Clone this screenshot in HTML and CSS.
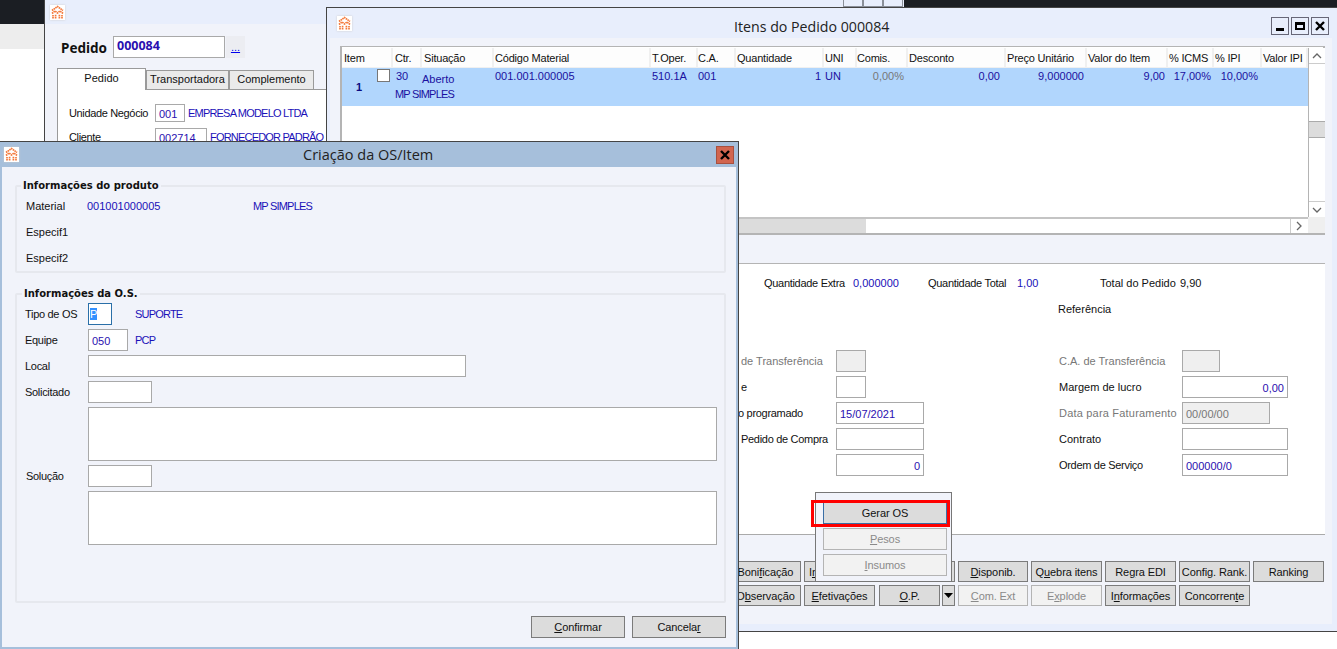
FILE: index.html
```html
<!DOCTYPE html>
<html lang="pt">
<head>
<meta charset="utf-8">
<title>Criação da OS/Item</title>
<link rel="stylesheet" href="styles.css">
</head>
<body>
<svg class="defs" width="0" height="0">
  <symbol id="logo" viewBox="0 0 15 15">
    <rect width="15" height="15" fill="#fff"/>
    <g fill="none" stroke="#f4793b" stroke-width="1.7" stroke-dasharray="1.6 .5">
      <path d="M2 5.5 L7.5 1.5 L13 5.5"/>
      <path d="M2 8.5 L5 6 L7.5 8 L10 6 L13 8.5"/>
      <path d="M3 13.5 V10 M5.6 13.5 V9.5 M9.4 13.5 V9.5 M12 13.5 V10"/>
    </g>
  </symbol>
</svg>

<div class="desk-top-left"><div class="dark-strip"></div><div class="gray-strip"></div></div>
<div class="desk-top-right"></div>

<section class="window win-back">
  <header class="back-title"><svg class="logo"><use href="#logo"/></svg></header>
  <div class="back-chrome"><i></i><i></i><i></i></div>
  <div class="pedido-row">
    <strong class="pedido-label">Pedido</strong>
    <span class="field pedido-input">000084</span>
    <span class="ellipsis">...</span>
  </div>
  <div class="tabs">
    <span class="tab tab-on">Pedido</span>
    <span class="tab tab-t">Transportadora</span>
    <span class="tab tab-c">Complemento</span>
  </div>
  <div class="tab-body">
    <div class="back-row"><span class="back-label">Unidade Negócio</span><span class="field w30">001</span><span class="val caps">EMPRESA MODELO LTDA</span></div>
    <div class="back-row"><span class="back-label">Cliente</span><span class="field w52">002714</span><span class="val caps">FORNECEDOR PADRÃO</span></div>
  </div>
</section>

<section class="window win-items">
  <header class="items-title">
    <svg class="logo"><use href="#logo"/></svg>
    <h1 class="title-text">Itens do Pedido 000084</h1>
    <div class="win-btns">
      <span class="wbtn"><svg width="16" height="16" viewBox="0 0 16 16"><rect x="4" y="10" width="8" height="3"/></svg></span>
      <span class="wbtn"><svg width="16" height="16" viewBox="0 0 16 16"><path fill-rule="evenodd" d="M3 4h10v8H3z M5 7h6v3H5z"/></svg></span>
      <span class="wbtn"><svg width="16" height="16" viewBox="0 0 16 16"><path d="M4 4 L12 12 M12 4 L4 12" stroke="#000" stroke-width="2.4"/></svg></span>
    </div>
  </header>
  <div class="items-body">
    <div class="grid-box">
      <div class="grid-main">
        <div class="grid-cols grid-head">
          <span>Item</span><span>Ctr.</span><span>Situação</span><span class="h1">Código Material</span><span class="h1">T.Oper.</span><span class="h0">C.A.</span><span class="h1">Quantidade</span><span class="h1">UNI</span><span class="h0">Comis.</span><span class="h1">Desconto</span><span class="h1">Preço Unitário</span><span class="h1">Valor do Item</span><span class="h1">% ICMS</span><span class="h1">% IPI</span><span class="h1">Valor IPI</span>
        </div>
        <div class="grid-cols grid-row">
          <span class="c-item"><b>1</b><i class="check"></i></span>
          <span class="c-ctr">30</span>
          <span class="c-sit">Aberto</span>
          <span class="r1">001.001.000005</span><span class="r1">510.1A</span><span class="r0">001</span>
          <span class="num p3">1</span><span class="r1">UN</span><span class="num muted">0,00%</span><span class="num p6">0,00</span><span class="num p3">9,000000</span><span class="num p3">9,00</span><span class="num p3">17,00%</span><span class="num">10,00%</span><span></span>
          <span class="c-desc caps">MP SIMPLES</span>
        </div>
      </div>
      <div class="vscroll">
        <span class="sb-btn"><svg width="16" height="16" viewBox="0 0 16 16"><path d="M4 10 L8 6 L12 10" fill="none" stroke="#666" stroke-width="1.3"/></svg></span>
        <span class="sb-track"><i class="sb-thumb"></i></span>
        <span class="sb-btn"><svg width="16" height="16" viewBox="0 0 16 16"><path d="M4 6 L8 10 L12 6" fill="none" stroke="#666" stroke-width="1.3"/></svg></span>
      </div>
      <div class="hscroll">
        <span class="hs-spacer"></span>
        <span class="hs-thumb"></span>
        <span class="hs-track"></span>
        <span class="hs-btn"><svg width="16" height="14" viewBox="0 1 16 14"><path d="M6 4 L10 8 L6 12" fill="none" stroke="#666" stroke-width="1.3"/></svg></span>
      </div>
      <div class="corner"></div>
    </div>

    <div class="order-panel">
      <div class="totals">
        <span class="t1 tight">Quantidade Extra</span><span class="val t2">0,000000</span>
        <span class="t3 tight">Quantidade Total</span><span class="val t4">1,00</span>
        <span class="t5">Total do Pedido</span><span class="t6">9,90</span>
      </div>
      <div class="ref">Referência</div>
      <div class="order-form">
        <span class="lab off">de Transferência</span><span class="field w30 dis"></span>
        <span class="lab off r">C.A. de Transferência</span><span class="field w38 dis"></span>

        <span class="lab">e</span><span class="field w30"></span>
        <span class="lab r">Margem de lucro</span><span class="field w106 right">0,00</span>

        <span class="lab lab-o tight">o programado</span><span class="field w88">15/07/2021</span>
        <span class="lab off r wide">Data para Faturamento</span><span class="field w88 dis grayv">00/00/00</span>

        <span class="lab tight">Pedido de Compra</span><span class="field w88"></span>
        <span class="lab r">Contrato</span><span class="field w106"></span>

        <span class="lab"></span><span class="field w88 right">0</span>
        <span class="lab r tight">Ordem de Serviço</span><span class="field w106">000000/0</span>
      </div>
    </div>

    <div class="btn-area">
      <div class="btn-row">
        <span class="btn b71">Boni<u>f</u>icação</span>
        <span class="btn b71 left">I<u>n</u></span>
        <span class="btn b76"></span>
        <span class="btn b69"><u>D</u>isponib.</span>
        <span class="btn b71"><span>Q<u>u</u>ebra itens</span></span>
        <span class="btn b71">Re<u>g</u>ra EDI</span>
        <span class="btn b71">Config. Rank.</span>
        <span class="btn b71">Ranking</span>
      </div>
      <div class="btn-row">
        <span class="btn b71">O<u>b</u>servação</span>
        <span class="btn b71"><u>E</u>fetivações</span>
        <span class="btn b61"><u>O</u>.P.</span>
        <span class="btn b13"><svg width="9" height="5" viewBox="0 0 9 5"><path d="M0 0H9L4.5 5Z"/></svg></span>
        <span class="btn b69 off"><u>C</u>om. Ext</span>
        <span class="btn b71 off">E<u>x</u>plode</span>
        <span class="btn b71">I<u>n</u>formações</span>
        <span class="btn b71">Concorren<u>t</u>e</span>
      </div>
    </div>
  </div>
</section>

<div class="popup">
  <span class="btn pop focus">Gerar OS</span>
  <span class="btn pop off"><u>P</u>esos</span>
  <span class="btn pop off"><u>I</u>nsumos</span>
</div>
<div class="red-mark"></div>

<section class="window dialog">
  <header class="dlg-title">
    <svg class="logo"><use href="#logo"/></svg>
    <h2 class="dlg-text">Criação da OS/Item</h2>
    <span class="dlg-close"><svg width="12" height="12" viewBox="0 0 12 12"><path d="M2 2 L10 10 M10 2 L2 10" stroke="#000" stroke-width="2.4"/></svg></span>
  </header>
  <div class="dlg-body">
    <fieldset class="group g1">
      <legend>Informações do produto</legend>
      <div class="info-row"><span class="il">Material</span><span class="val iv">001001000005</span><span class="val caps">MP SIMPLES</span></div>
      <div class="info-row"><span class="il">Especif1</span></div>
      <div class="info-row"><span class="il">Especif2</span></div>
    </fieldset>
    <fieldset class="group g2">
      <legend>Informações da O.S.</legend>
      <div class="os-form">
        <div class="os-row"><span class="ol">Tipo de OS</span><span class="field w24 focus-f"><mark>P</mark></span><span class="val caps ov">SUPORTE</span></div>
        <div class="os-row"><span class="ol">Equipe</span><span class="field w40">050</span><span class="val caps ov2">PCP</span></div>
        <div class="os-row"><span class="ol">Local</span><span class="field w378"></span></div>
        <div class="os-row"><span class="ol">Solicitado</span><span class="field w64"></span></div>
        <div class="os-row tall"><span class="ol"></span><span class="field w629 area"></span></div>
        <div class="os-row"><span class="ol sol">Solução</span><span class="field w64"></span></div>
        <div class="os-row tall"><span class="ol"></span><span class="field w629 area"></span></div>
      </div>
    </fieldset>
    <div class="dlg-actions">
      <span class="btn b94"><u>C</u>onfirmar</span>
      <span class="btn b94">Cancela<u>r</u></span>
    </div>
  </div>
</section>
</body>
</html>
```
FILE: styles.css
```css
* { box-sizing: border-box; }
html, body { margin: 0; height: 100%; }
body {
  position: relative;
  width: 1337px;
  height: 649px;
  overflow: hidden;
  background: #fff;
  font: 11px/14px "Liberation Sans", Arial, sans-serif;
  color: #111;
}
u { text-decoration: underline; }
.defs { position: absolute; }
.logo { display: block; width: 15px; height: 15px; box-shadow: 0 0 2px #ccc; flex: none; }
.caps { letter-spacing: -.8px; }
.tight { letter-spacing: -.3px; }
.wide { letter-spacing: .2px; }

.desk-top-left { position: absolute; left: 0; top: 0; width: 44px; }
.dark-strip { height: 24px; background: #1b1e23; }
.gray-strip { height: 25px; background: #ededed; }
.desk-top-right { position: absolute; left: 904px; top: 0; right: 0; height: 8px; background: #1b1e23; }

.window { position: absolute; }

/* back window */
.win-back { left: 44px; top: 0; width: 860px; height: 200px; background: #f1f3fa; border-left: 1px solid #444; }
.back-title { height: 24px; background: #e8eefc; padding: 5px 0 0 5px; }
.back-chrome { position: absolute; left: 798px; top: 0; display: flex; gap: 0; }
.back-chrome i { display: block; width: 20px; height: 7px; border: 1px solid #8a8f99; border-top: 0; background: #e8eefc; }
.pedido-row { display: flex; align-items: center; height: 22px; margin: 12px 0 0 16px; }
.pedido-label { font: bold 13.5px/18px "Noto Sans", sans-serif; width: 52px; padding-top: 1px; height: 19px; }
.pedido-input { width: 112px; height: 22px; font: bold 12.5px/21px "Noto Sans", sans-serif; }
.ellipsis { width: 19px; height: 22px; margin-left: 1px; background: #ecedf2; color: #00e; text-align: center; text-decoration: underline; line-height: 22px; }
.tabs { display: flex; align-items: flex-end; height: 21px; margin: 10px 0 0 12px; }
.tab { display: block; height: 19px; border: 1px solid #9a9a9a; border-bottom: 0; background: #eaeaea; text-align: center; line-height: 16px; white-space: nowrap; }
.tab-on { width: 89px; height: 22px; background: #fff; line-height: 19px; position: relative; top: 1px; }
.tab-t { width: 83px; }
.tab-c { width: 85px; }
.tab-body { margin-left: 12px; height: 120px; background: #fff; border-top: 1px solid #9a9a9a; border-left: 1px solid #9a9a9a; padding-top: 14px; }
.back-row { display: flex; align-items: center; height: 18px; margin-bottom: 6px; }
.back-label { flex: none; width: 97px; padding-left: 11px; white-space: nowrap; letter-spacing: -.35px; }
.val { color: #1a10b8; white-space: nowrap; }
.back-row .val { margin-left: 3px; }

/* fields */
.field { display: block; flex: none; height: 22px; padding: 3px 3px 0; border: 1px solid #a9a9a9; background: #fff; color: #2a0fb0; line-height: 16px; }
.w24 { width: 24px; } .w30 { width: 30px; } .w38 { width: 38px; } .w40 { width: 40px; } .w52 { width: 52px; }
.w64 { width: 64px; } .w88 { width: 88px; } .w106 { width: 106px; } .w378 { width: 378px; } .w629 { width: 629px; }
.back-row .field { height: 18px; padding-top: 1px; }
.pedido-row .field { padding-top: 1px; }
.right { text-align: right; }
.dis { background: #efefef; }
.grayv { color: #777; }

/* items window */
.win-items { left: 326px; top: 7px; width: 1011px; height: 625px; background: #e8eefc; border-top: 1px solid #444; border-left: 1px solid #444; border-bottom: 1px solid #444; }
.items-title { position: relative; display: flex; align-items: center; height: 30px; padding-left: 10px; }
.title-text { position: absolute; left: 407px; top: 9px; margin: 0; font: 400 14.2px/20px "Open Sans", sans-serif; color: #222; white-space: nowrap; }
.win-btns { display: flex; gap: 2px; margin-left: auto; margin-right: 8px; margin-top: 6px; }
.wbtn { display: block; width: 18px; height: 18px; border: 1px solid #667; background: #e8eefc; }
.wbtn svg { display: block; }
.items-body { margin-left: 3px; height: 586px; width: 1002px; background: #f1f3fa; padding: 8px 0 0 10px; }
.grid-box { display: grid; grid-template-columns: 966px 17px; grid-template-rows: 169px 16px; width: 985px; height: 189px; border: 1px solid #b4b4b4; border-width: 1px 2px 2px 2px; padding-top: 1px; background: #fff; }
.grid-main { overflow: hidden; background: #fff; }
.grid-cols { display: grid; grid-template-columns: 51px 29px 72px 157px 47px 38px 88px 33px 51px 98px 81px 81px 46px 48px 46px; }
.grid-head { height: 20px; background: #f0f0f0; }
.grid-head span { display: block; height: 19px; margin-right: 2px; padding-left: 2px; background: #fdfdfd; line-height: 20px; white-space: nowrap; letter-spacing: -.2px; }
.grid-head .h1 { padding-left: 1px; }
.grid-head .h0 { padding-left: 0; }
.grid-row { position: relative; grid-template-rows: 18px 20px; height: 38px; background: #b1d6fd; color: #1a10a0; padding-top: 1px; }
.grid-row > span { display: block; padding: 0 4px 0 2px; line-height: 14px; white-space: nowrap; }
.grid-row > .r1 { padding-left: 1px; }
.grid-row > .r0 { padding-left: 0; }
.grid-row > .c-ctr { padding-left: 3px; }
.grid-row > .num { text-align: right; white-space: nowrap; padding: 0 4px 0 0; }
.grid-row > .p6 { padding-right: 6px; }
.grid-row > .p3 { padding-right: 3px; }
.grid-row > .muted { color: #777; padding-right: 4px; }
.c-item { position: relative; }
.c-item b { position: absolute; left: 14px; top: 11px; color: #0a0a80; }
.check { position: absolute; left: 35px; top: 0; width: 13px; height: 13px; border: 1px solid #777; background: #fff; }
.grid-row > .c-sit { padding: 3px 0 0 0; }
.grid-row > .c-desc { grid-column: 2 / span 3; grid-row: 2; padding: 0 0 0 2px; white-space: nowrap; }
.vscroll { display: flex; flex-direction: column; grid-row: 1; grid-column: 2; border-left: 1px solid #b4b4b4; background: #fff; }
.sb-btn { display: block; height: 16px; flex: none; border-bottom: 1px solid #ccc; }
.sb-btn:last-child { border-top: 1px solid #ccc; border-bottom: 0; }
.sb-btn svg { display: block; }
.sb-track { flex: 1; padding-top: 57px; }
.sb-thumb { display: block; height: 17px; background: #dcdcdc; border: 1px solid #aaa; border-width: 1px 0; }
.hscroll { display: flex; grid-column: 1; grid-row: 2; border-top: 2px solid #c4c4c4; background: #fff; }
.hs-spacer { width: 396px; }
.hs-thumb { width: 128px; background: #dcdcdc; }
.hs-track { flex: 1; }
.hs-btn { width: 18px; border-left: 1px solid #ccc; }
.hs-btn svg { display: block; }
.corner { grid-column: 2; grid-row: 2; background: #efefef; }

/* order panel */
.order-panel { margin: 28px 0 0 398px; width: 587px; height: 272px; background: #fff; border-top: 1px solid #b4b4b4; border-bottom: 1px solid #aaa; }
.totals { display: flex; padding-top: 12px; height: 26px; white-space: nowrap; }
.t1 { margin-left: 26px; width: 89px; flex: none; }
.t2 { width: 75px; flex: none; }
.t3 { width: 89px; flex: none; }
.t4 { width: 83px; flex: none; }
.t5 { width: 80px; flex: none; }
.ref { margin: 12px 0 0 320px; height: 14px; }
.order-form { display: grid; grid-template-columns: 98px 168px 178px 1fr; grid-auto-rows: 26px; align-items: center; margin-top: 32px; }
.lab { padding-left: 3px; white-space: nowrap; }
.lab-o { padding-left: 0; }
.lab.r { padding-left: 55px; }
.lab.off { color: #777; }
.order-form .field.w30, .order-form .field.w88 { justify-self: start; }

/* buttons */
.btn-area { margin: 26px 0 0 390px; display: flex; flex-direction: column; gap: 3px; }
.btn-row { display: flex; gap: 3px; height: 21px; }
.btn { display: flex; align-items: center; justify-content: center; flex: none; height: 21px; border: 1px solid #7b7b7b; background: #dcdcdc; color: #111; white-space: nowrap; overflow: hidden; letter-spacing: -.1px; }
.btn.off { border-color: #b4b4b4; background: #f2f2f2; color: #8a8a8a; }
.btn.left { justify-content: flex-start; padding-left: 4px; }
.b13 { width: 13px; margin-left: -1px; }
.b61 { width: 61px; margin-left: 1px; }
.b69 { width: 70px; }
.b71 { width: 71px; }
.b76 { width: 76px; margin-left: 1px; }
.b94 { width: 94px; height: 22px; }
.b13 svg { display: block; }

/* popup */
.popup { position: absolute; left: 815px; top: 492px; width: 137px; height: 90px; padding: 9px 4px 0 7px; display: flex; flex-direction: column; gap: 4px; background: #f1f3fa; border: 1px solid #777; }
.btn.pop { width: 124px; height: 22px; }
.btn.focus { border-color: #3a6ea5; background: #dcdcdc; }
.red-mark { position: absolute; left: 811px; top: 500px; width: 139px; height: 27px; border: 3px solid #f00; }

/* dialog */
.dialog { left: 0; top: 141px; width: 739px; height: 508px; background: #a6bfdb; border-top: 1px solid #444; border-right: 1px solid #444; padding: 0 2px 2px; }
.dlg-title { position: relative; display: flex; align-items: center; height: 25px; margin: 0 -2px; padding-left: 4px; }
.dlg-text { position: absolute; left: 303px; top: 3px; margin: 0; font: 400 14.5px/20px "Open Sans", sans-serif; color: #222; white-space: nowrap; }
.dlg-close { position: absolute; left: 716px; top: 4px; display: flex; align-items: center; justify-content: center; width: 18px; height: 18px; background: #d2654f; border: 1px solid #a8503f; }
.dlg-close svg { display: block; }
.dlg-body { height: 480px; width: 734px; background: #f1f3fa; padding: 12px 10px 0 13px; }
.group { margin: 0; padding: 0; border: 2px solid #e6e8ee; border-radius: 2px; min-width: 0; width: 711px; }
.group legend { margin-left: 4px; padding: 0 2px; font: bold 10px/14px "DejaVu Sans", sans-serif; color: #111; white-space: nowrap; }
.g1 { height: 94px; padding-top: 0; }
.info-row { display: flex; height: 26px; align-items: center; white-space: nowrap; }
.il { width: 61px; margin-left: 9px; flex: none; }
.iv { width: 166px; flex: none; }
.g2 { height: 316px; margin-top: 14px; padding-top: 2px; }
.g2 legend { margin-left: 5px; }
.os-form { display: flex; flex-direction: column; gap: 4px; }
.os-row { display: flex; align-items: center; height: 22px; white-space: nowrap; }
.os-row.tall { height: 54px; }
.os-row .field { padding-top: 3px; }
.ol { width: 71px; padding-left: 8px; flex: none; letter-spacing: -.3px; }
.sol { padding-left: 9px; }
.ov { margin-left: 23px; }
.ov2 { margin-left: 7px; }
.area { height: 54px; }
.os-row .focus-f { border-color: #2a6fa8; border-width: 1px; padding: 2px 0 0 1px; }
mark { background: #3390ff; color: #fff; }
.dlg-actions { display: flex; justify-content: flex-end; gap: 7px; margin-top: 13px; width: 711px; }
```
